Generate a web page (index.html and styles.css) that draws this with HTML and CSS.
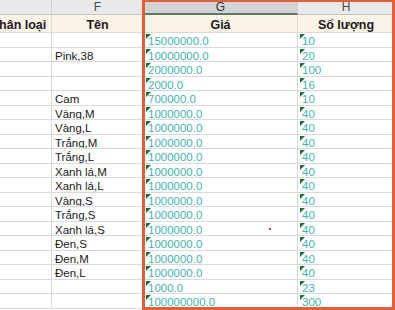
FILE: index.html
```html
<!DOCTYPE html>
<html>
<head>
<meta charset="utf-8">
<link rel="stylesheet" href="styles.css">
</head>
<body>
<div class="sheet">
  <div class="grid">
    <div class="ch"></div>
    <div class="ch">F</div>
    <div class="ch sel">G</div>
    <div class="ch">H</div>

    <div class="hd">Phân loại</div>
    <div class="hd">Tên</div>
    <div class="hd">Giá</div>
    <div class="hd">Số lượng</div>
  </div>
  <div class="grid body" id="rows"></div>
  <div class="frame"></div>
  <div class="dot"></div>
</div>
<script>
const data = [
  ["", "15000000.0", "10"],
  ["Pink,38", "10000000.0", "20"],
  ["", "2000000.0", "100"],
  ["", "2000.0", "16"],
  ["Cam", "700000.0", "10"],
  ["Vàng,M", "1000000.0", "40"],
  ["Vàng,L", "1000000.0", "40"],
  ["Trắng,M", "1000000.0", "40"],
  ["Trắng,L", "1000000.0", "40"],
  ["Xanh lá,M", "1000000.0", "40"],
  ["Xanh lá,L", "1000000.0", "40"],
  ["Vàng,S", "1000000.0", "40"],
  ["Trắng,S", "1000000.0", "40"],
  ["Xanh lá,S", "1000000.0", "40"],
  ["Đen,S", "1000000.0", "40"],
  ["Đen,M", "1000000.0", "40"],
  ["Đen,L", "1000000.0", "40"],
  ["", "1000.0", "23"],
  ["", "100000000.0", "300"]
];
const host = document.getElementById("rows");
for (const [name, price, qty] of data) {
  host.insertAdjacentHTML("beforeend",
    '<div class="c"></div>' +
    '<div class="c">' + name + '</div>' +
    '<div class="c num"><i class="tri"></i>' + price + '</div>' +
    '<div class="c num"><i class="tri"></i>' + qty + '</div>');
}
</script>
</body>
</html>
```

FILE: styles.css
```css
* { box-sizing: border-box; }
html, body {
  margin: 0;
  padding: 0;
  background: #ffffff;
  width: 395px;
  height: 310px;
  overflow: hidden;
}
.sheet {
  position: relative;
  width: 395px;
  height: 310px;
  overflow: hidden;
  font-family: "Liberation Sans", Arial, sans-serif;
}
.grid {
  display: grid;
  grid-template-columns: 66px 92px 154px 97px;
  margin-left: -14px;
  width: 409px;
}
.ch {
  height: 15px;
  background: #e9e9e9;
  border-right: 1px solid #cfcfcf;
  border-bottom: 1px solid #c4c4c4;
  color: #4a4a4a;
  font-size: 12px;
  line-height: 14px;
  text-align: center;
}
.ch.sel {
  background: #d3d3d3;
  border-bottom: 2px solid #5d7a66;
  color: #333;
}
.hd {
  height: 18px;
  background: #fdf3e7;
  border-right: 1px solid #e6ddd2;
  border-bottom: 1px solid #e0dad3;
  font-weight: bold;
  font-size: 12.5px;
  line-height: 17px;
  padding-top: 2px;
  text-align: center;
  color: #1a1a1a;
}
.body {
  grid-auto-rows: 14.5px;
}
.c {
  position: relative;
  border-right: 1px solid #d9d9d9;
  border-bottom: 1px solid #d9d9d9;
  font-size: 11.5px;
  line-height: 16px;
  padding-left: 3px;
  color: #1a1a1a;
  white-space: nowrap;
  overflow: hidden;
}
.num {
  color: #42b4ac;
  padding-left: 4px;
}
.tri {
  position: absolute;
  left: 2px;
  top: 1px;
  width: 0;
  height: 0;
  border-top: 5px solid #1e6e36;
  border-right: 5px solid transparent;
}
.frame {
  position: absolute;
  left: 142px;
  top: -1px;
  right: 0;
  bottom: 0;
  border: 3px solid #e0603a;
}
.dot {
  position: absolute;
  left: 269px;
  top: 228px;
  width: 2px;
  height: 2px;
  background: #d8323a;
}
```
